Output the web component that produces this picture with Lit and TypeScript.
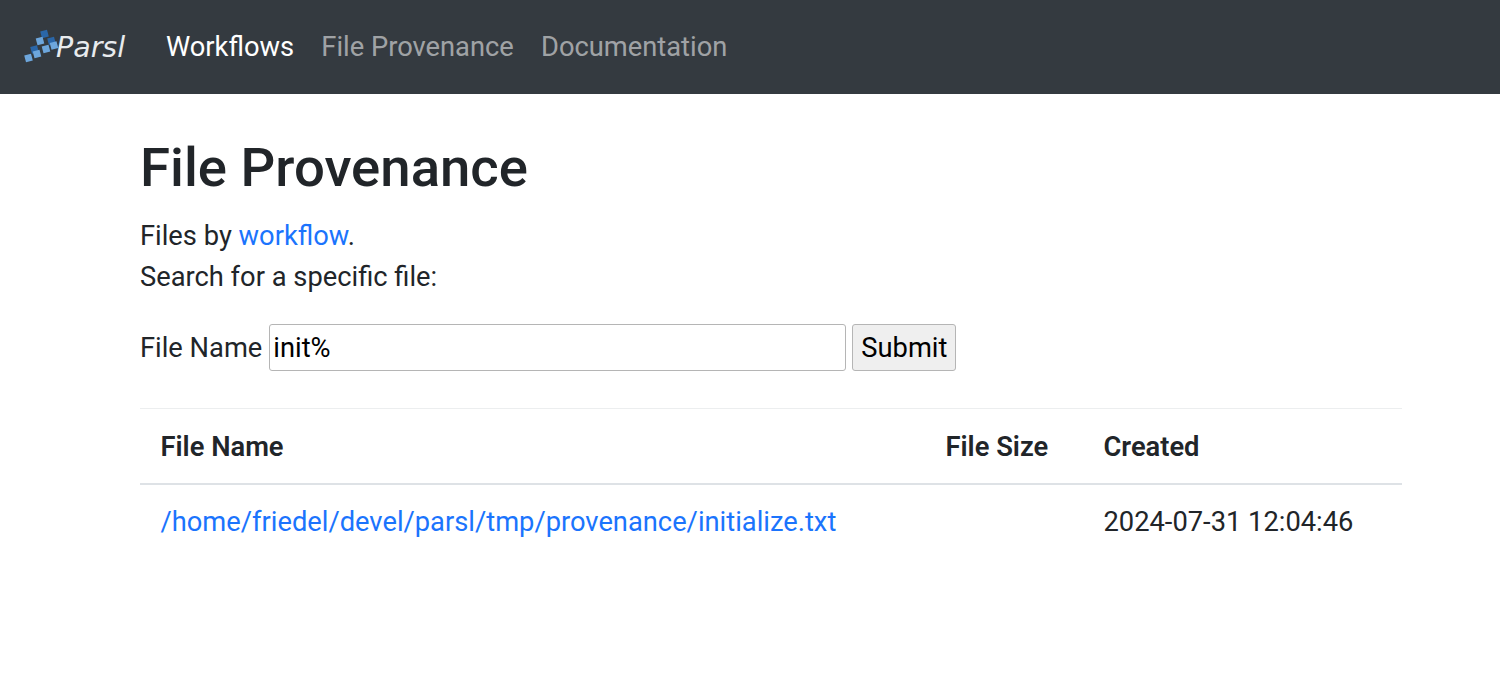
import { LitElement, html, css, svg } from "lit";
import { customElement } from "lit/decorators.js";

const squares: [number, number, string][] = [
  [44.5, 35, "#2a66a8"],
  [40, 42, "#6da6dc"],
  [51.5, 42, "#2a66a8"],
  [34.5, 50.5, "#2a66a8"],
  [46, 50, "#6da6dc"],
  [54, 46.5, "#6da6dc"],
  [37, 55, "#6da6dc"],
  [28.5, 59, "#6da6dc"],
];

@customElement("app-root")
export class AppRoot extends LitElement {
  static styles = css`
    :host { display: block; font-family: Roboto, "Liberation Sans", sans-serif; font-size: 27.3px; line-height: 40px; color: #212529; background: #fff; min-height: 692px; }
    a { text-decoration: none; }
    .nav { height: 94px; background: #343a40; display: flex; align-items: center; box-sizing: border-box; padding-left: 24px; }
    .brand { display: flex; align-items: center; width: 142px; height: 94px; flex: none; }
    .brand svg { display: block; }
    .logotext { font-family: "DejaVu Sans", sans-serif; font-style: italic; font-weight: 200; font-size: 28.5px; fill: #e8ebee; }
    .links { display: flex; gap: 27.2px; }
    .links a { color: rgba(255,255,255,.55); }
    .links a.active { color: #fff; }
    main { padding: 40px 98px 0 140px; }
    h1 { margin: 0 0 15px; font-size: 54.5px; line-height: 67px; font-weight: 500; }
    p { margin: 0; line-height: 41px; }
    .link { color: #1b74fd; }
    form { display: flex; align-items: center; margin-top: 26px; height: 47px; }
    label { margin-right: 7px; }
    .input { box-sizing: border-box; width: 577px; height: 47px; border: 1px solid #b5b5b5; border-radius: 3px; padding: 0 3px; font: inherit; color: #000; background: #fff; line-height: 45px; }
    .btn { box-sizing: border-box; height: 47px; width: 104px; margin-left: 6px; border: 1px solid #b5b5b5; border-radius: 3px; background: #efefef; font: inherit; color: #000; padding: 0; }
    table { border-collapse: collapse; width: 100%; margin-top: 37px; table-layout: fixed; }
    th, td { padding: 0 0 0 20.5px; text-align: left; }
    th { height: 72px; padding-top: 2px; border-top: 1px solid #eceeef; border-bottom: 2px solid #dee2e6; font-weight: 600; }
    td { height: 74px; }
    .c1 { width: 785px; box-sizing: border-box; }
    .c2 { width: 158px; box-sizing: border-box; }
  `;
  render() {
    return html`
      <div class="nav">
        <a class="brand" href="#">
          <svg width="104" height="44" viewBox="24 26 104 44">
            ${squares.map(([x, y, c]) => svg`<rect x=${x - 3.5} y=${y - 3.5} width="7" height="7" fill=${c} transform=${`rotate(-15 ${x} ${y})`}></rect>`)}
            <text class="logotext" x="56" y="58">Parsl</text>
          </svg>
        </a>
        <div class="links">
          <a class="active" href="#">Workflows</a>
          <a href="#">File Provenance</a>
          <a href="#">Documentation</a>
        </div>
      </div>
      <main>
        <h1>File Provenance</h1>
        <p>Files by <a class="link" href="#">workflow</a>.</p>
        <p>Search for a specific file:</p>
        <form>
          <label>File Name</label>
          <input class="input" .value=${"init%"} />
          <button class="btn" type="button">Submit</button>
        </form>
        <table>
          <thead><tr><th class="c1">File Name</th><th class="c2">File Size</th><th>Created</th></tr></thead>
          <tbody><tr><td><a class="link" href="#">/home/friedel/devel/parsl/tmp/provenance/initialize.txt</a></td><td></td><td>2024-07-31 12:04:46</td></tr></tbody>
        </table>
      </main>
    `;
  }
}
